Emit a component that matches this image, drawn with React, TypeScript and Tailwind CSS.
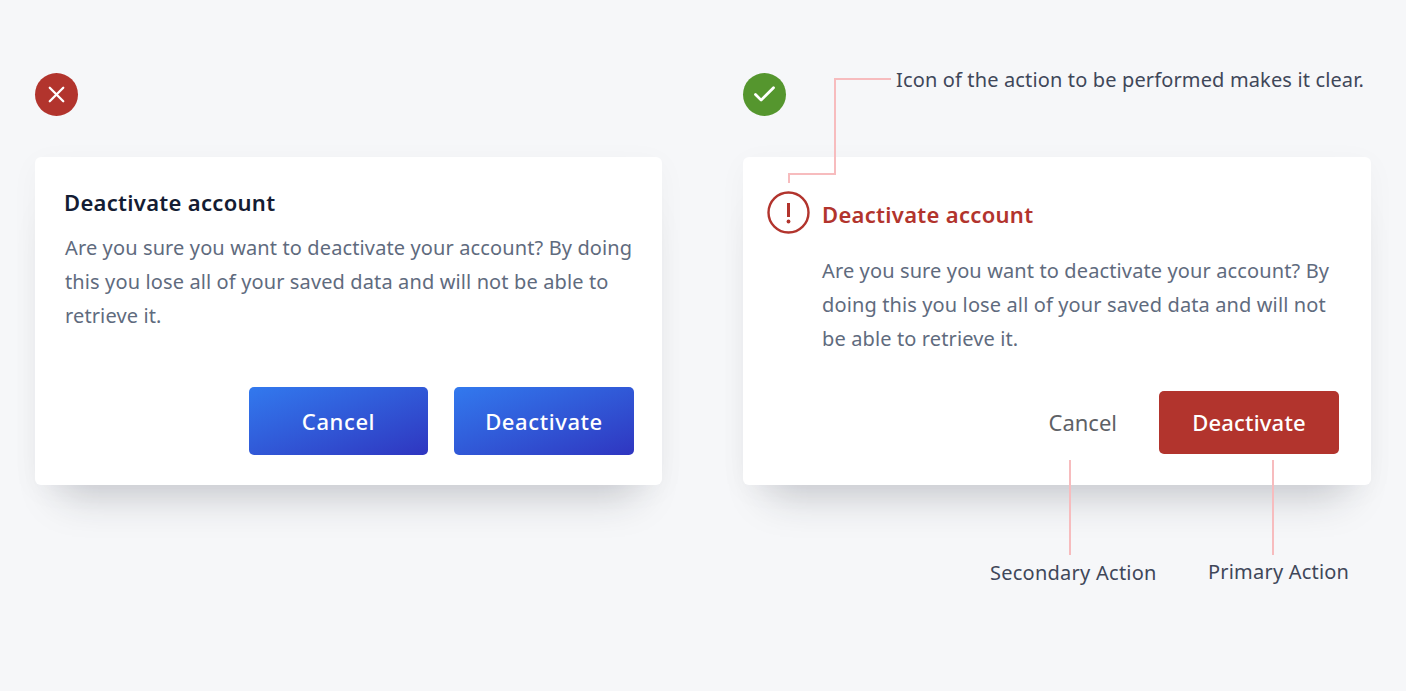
import { Check, X } from 'lucide-react';

const font = "font-['Noto_Sans','Open_Sans',sans-serif]";

function Leader({ className }: { className: string }) {
  return <div className={`absolute bg-[#f7bcbe] ${className}`} />;
}

export default function App() {
  return (
    <div className={`${font} flex h-[691px] w-full gap-[81px] overflow-hidden bg-[#f6f7f9] pl-[35px] pt-[73px]`}>
      {/* Don't */}
      <div className="w-[627px]">
        <div className="flex h-[43px] w-[43px] items-center justify-center rounded-full bg-[#b2342d]">
          <X className="h-[27px] w-[27px] text-white" strokeWidth={2} />
        </div>
        <div className="mt-[41px] flex h-[328px] flex-col rounded-[6px] bg-white pl-[30px] pr-[28px] pt-[28px] shadow-[0_36px_40px_-26px_rgba(30,35,50,0.22),0_6px_30px_0_rgba(30,35,50,0.035)]">
          <h2 className="-ml-px text-[22px] leading-[34px] font-semibold tracking-[0.3px] text-[#141c33]">Deactivate account</h2>
          <p className="mt-[12px] text-[20px] leading-[34px] tracking-[0.12px] text-[#5f6b7e]">
            Are you sure you want to deactivate your account? By doing this you lose all of your saved data and will not be able to retrieve it.
          </p>
          <div className="mt-[54px] flex justify-end gap-[26px]">
            <button className="h-[68px] w-[179px] rounded-[5px] bg-gradient-to-br from-[#3279ee] to-[#2f35c0] text-[22px] font-medium tracking-[0.6px] text-white">Cancel</button>
            <button className="h-[68px] w-[180px] rounded-[5px] bg-gradient-to-br from-[#3279ee] to-[#2f35c0] text-[22px] font-medium tracking-[0.6px] text-white">Deactivate</button>
          </div>
        </div>
      </div>

      {/* Do */}
      <div className="relative w-[628px]">
        <div className="flex h-[43px] w-[43px] items-center justify-center rounded-full bg-[#55962e]">
          <Check className="h-[27px] w-[27px] text-white" strokeWidth={2.5} />
        </div>
        <div className="mt-[41px] flex h-[328px] flex-col rounded-[6px] bg-white pl-[24px] pr-[32px] pt-[34px] shadow-[0_36px_40px_-26px_rgba(30,35,50,0.22),0_6px_30px_0_rgba(30,35,50,0.035)]">
          <div className="flex items-center gap-[12px]">
            <svg width="43" height="43" viewBox="0 0 43 43" fill="none" stroke="#b2342d" strokeWidth="2.4">
              <circle cx="21.5" cy="21.5" r="20" />
              <path d="M21.5 12v14" strokeWidth="3" />
              <circle cx="21.5" cy="30.5" r="1.9" fill="#b2342d" stroke="none" />
            </svg>
            <h2 className="pt-[2px] text-[22px] leading-[34px] font-semibold tracking-[0.3px] text-[#b2342d]">Deactivate account</h2>
          </div>
          <p className="ml-[55px] mt-[20px] text-[20px] leading-[34px] tracking-[0.12px] text-[#5f6b7e]">
            Are you sure you want to deactivate your account? By doing this you lose all of your saved data and will not be able to retrieve it.
          </p>
          <div className="mt-[35px] flex items-center justify-end gap-[42px]">
            <button className="text-[22px] text-[#5e6166]">Cancel</button>
            <button className="h-[63px] w-[180px] rounded-[5px] bg-[#b2342d] text-[22px] font-medium tracking-[0.2px] text-white">Deactivate</button>
          </div>
        </div>

        {/* annotations */}
        <Leader className="left-[45px] top-[100px] h-[10px] w-[2px]" />
        <Leader className="left-[45px] top-[100px] h-[2px] w-[48px]" />
        <Leader className="left-[91px] top-[5px] h-[97px] w-[2px]" />
        <Leader className="left-[91px] top-[5px] h-[2px] w-[57px]" />
        <span className="absolute left-[153px] top-[-8px] whitespace-nowrap text-[20px] leading-[30px] tracking-[0.14px] text-[#3f4759]">
          Icon of the action to be performed makes it clear.
        </span>
        <Leader className="left-[326px] top-[387px] h-[95px] w-[2px]" />
        <Leader className="left-[529px] top-[387px] h-[95px] w-[2px]" />
        <span className="absolute left-[247px] top-[485px] whitespace-nowrap text-[20px] leading-[30px] tracking-[0.25px] text-[#3f4759]">Secondary Action</span>
        <span className="absolute left-[465px] top-[484px] whitespace-nowrap text-[20px] leading-[30px] tracking-[0.2px] text-[#3f4759]">Primary Action</span>
      </div>
    </div>
  );
}
